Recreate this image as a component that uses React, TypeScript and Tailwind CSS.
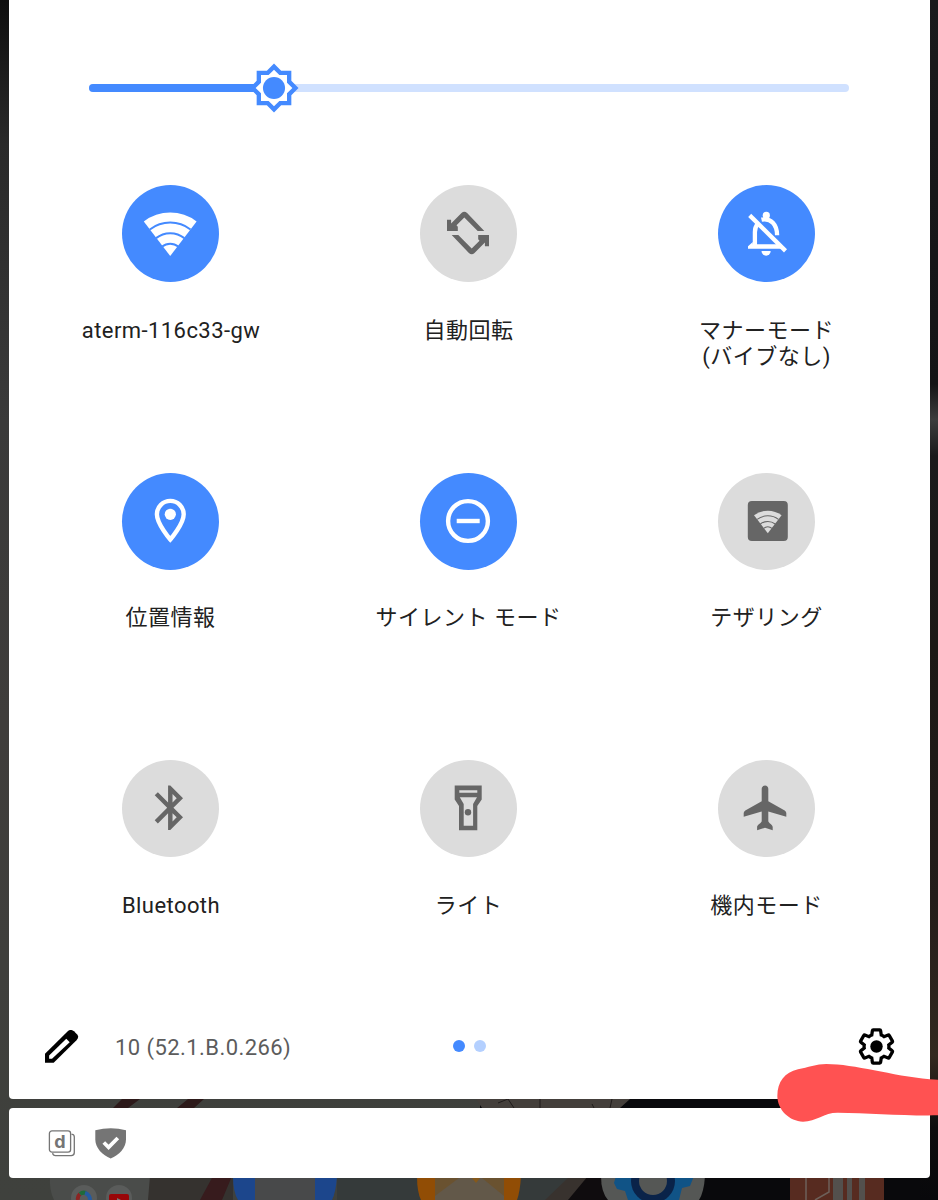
import React from "react";
import clsx from "clsx";

const BLUE = "#448aff";

function WifiFan({ gap }: { gap: string }) {
  return (
    <>
      <path d="M0 0L-26.4 -34.5A43.5 43.5 0 0 1 26.4 -34.5Z" fill="currentColor" />
      <g fill="none" stroke={gap} strokeWidth="2.1">
        <path d="M-21.3 -27.8A35 35 0 0 1 21.3 -27.8" transform="scale(.955)" />
        <path d="M-14.6 -18.4A23.5 23.5 0 0 1 14.6 -18.4" transform="scale(.97)" />
        <path d="M-8.3 -9.8A12.8 12.8 0 0 1 8.3 -9.8" transform="scale(.96)" />
      </g>
    </>
  );
}

function WifiIcon() {
  return (
    <g transform="translate(48.7 71)">
      <WifiFan gap={BLUE} />
    </g>
  );
}

function RotateIcon() {
  const arrow =
    "M64.8 46H58.2L44.8 32.4 37 40.2 38.3 41.7V46H27.5V34.7H31.6V38.6L42 28.1Q44.8 25.6 47.6 28.1Z";
  return (
    <g fill="currentColor">
      <path d={arrow} />
      <path d={arrow} transform="rotate(180 48.5 48)" />
    </g>
  );
}

function BellOffIcon() {
  return (
    <>
      <g fill="none" stroke="currentColor" strokeWidth="4.3">
        <path d="M32.2 30.4L68 65.9" />
        <path d="M44 34.7C53.5 32.5 59.6 40 59.6 50.3" />
        <path d="M40.5 38.5Q37.4 42 37.4 47V61.5" />
      </g>
      <path d="M30.5 63.7V61.2L35.3 57V59.3H64V63.7Z" fill="currentColor" />
      <circle cx="48.8" cy="30.4" r="3.6" fill="currentColor" />
      <path d="M44 66H53.2A4.6 4.7 0 0 1 44 66Z" fill="currentColor" />
    </>
  );
}

function PinIcon() {
  return (
    <>
      <path
        d="M48.8 66.5C48.8 66.5 35.4 51 35.4 41.3a13.4 13.4 0 0 1 26.8 0C62.2 51 48.8 66.5 48.8 66.5Z"
        fill="none"
        stroke="currentColor"
        strokeWidth="4.4"
      />
      <circle cx="48.8" cy="41.3" r="5.6" fill="currentColor" />
    </>
  );
}

function DndIcon() {
  return (
    <g fill="none" stroke="currentColor" strokeWidth="4.4">
      <circle cx="48.5" cy="48" r="19.9" />
      <path d="M37.2 48H60.2" />
    </g>
  );
}

function TetherIcon() {
  return (
    <>
      <rect x="30.3" y="28" width="40" height="40" rx="4" fill="currentColor" />
      <g transform="translate(50.3 60.3) scale(.522)" className="text-[#dcdcdc]">
        <WifiFan gap="#666666" />
      </g>
    </>
  );
}

function BluetoothIcon() {
  return (
    <path
      transform="translate(22.1 21.1) scale(2.225)"
      fill="currentColor"
      d="M17.71 7.71L12 2h-1v7.59L6.41 5 5 6.41 10.59 12 5 17.59 6.41 19 11 14.41V22h1l5.71-5.71-4.3-4.29 4.3-4.29zM13 5.83l1.88 1.88L13 9.59V5.83zm1.88 10.46L13 18.17v-3.76l1.88 1.88z"
    />
  );
}

function FlashlightIcon() {
  return (
    <>
      <path
        fill="currentColor"
        fillRule="evenodd"
        d="M35.2 25.5H62.2V39.5L57.8 46V70.3H39.5V46L35.2 39.5ZM39.8 30.2V32.8H57.8V30.2ZM40.3 37.2L44.2 44V65.8H53.6V44L57.5 37.2Z"
      />
      <circle cx="48.5" cy="52.2" r="3.2" fill="currentColor" />
    </>
  );
}

function AirplaneIcon() {
  return (
    <path
      fill="currentColor"
      d="M47.5 25.5C49.4 25.5 50.8 27 50.8 28.8V41.2L67.2 50.5Q68.8 51.5 68.8 53V56.8L50.8 51.5V61.2C51.5 63.5 55.2 64.5 55.2 67V70.2L47.5 67.8 39.6 70.2V67C39.6 64.5 43.5 63.5 44.2 61.2V51.5L26.2 56.8V53Q26.2 51.5 27.8 50.5L44.2 41.2V28.8C44.2 27 45.6 25.5 47.5 25.5Z"
    />
  );
}

const tiles = [
  { label: ["aterm-116c33-gw"], latin: true, on: true, icon: <WifiIcon /> },
  { label: ["自動回転"], on: false, icon: <RotateIcon /> },
  { label: ["マナーモード", "(バイブなし)"], on: true, icon: <BellOffIcon /> },
  { label: ["位置情報"], on: true, icon: <PinIcon /> },
  { label: ["サイレント モード"], on: true, icon: <DndIcon /> },
  { label: ["テザリング"], on: false, icon: <TetherIcon /> },
  { label: ["Bluetooth"], latin: true, on: false, icon: <BluetoothIcon /> },
  { label: ["ライト"], on: false, icon: <FlashlightIcon /> },
  { label: ["機内モード"], on: false, icon: <AirplaneIcon /> },
];

// Dimmed home screen behind the shade
function Wallpaper() {
  return (
    <svg className="absolute inset-0" width="938" height="1200" viewBox="0 0 938 1200">
      <defs>
        <linearGradient id="left" x1="0" y1="0" x2="0" y2="1">
          <stop offset="0" stopColor="#0e0e0e" />
          <stop offset=".12" stopColor="#2a2a2a" />
          <stop offset=".35" stopColor="#3a3a3a" />
          <stop offset=".6" stopColor="#3f3d3b" />
          <stop offset="1" stopColor="#3f413d" />
        </linearGradient>
        <linearGradient id="right" x1="0" y1="0" x2="0" y2="1">
          <stop offset="0" stopColor="#1a1a1c" />
          <stop offset=".32" stopColor="#141416" />
          <stop offset=".35" stopColor="#3c3d3d" />
          <stop offset=".38" stopColor="#1a1a1b" />
          <stop offset=".54" stopColor="#1c1815" />
          <stop offset=".75" stopColor="#231d1a" />
          <stop offset=".88" stopColor="#33291f" />
          <stop offset=".94" stopColor="#0e0c0d" />
          <stop offset="1" stopColor="#08080b" />
        </linearGradient>
      </defs>
      <rect width="938" height="1200" fill="#09090c" />
      <rect width="480" height="1200" fill="url(#left)" />
      <rect x="920" width="18" height="1200" fill="url(#right)" />
      <path d="M113 1108L122 1099H140L128 1108ZM177 1108L188 1099H204L194 1108Z" fill="#2d1a1a" />
      <path d="M476 1099H630L620 1108H482Z" fill="#443f3b" />
      <path d="M498 1103L508 1099 514 1108M540 1099V1108M592 1104L594 1108M612 1099L610 1108" stroke="#1f1b1a" fill="none" />
      <rect x="337" y="1176" width="250" height="24" fill="#353a3a" />
      <path d="M545 1200L570 1176H620V1200Z" fill="#38322e" />
      <path d="M568 1200L588 1176H620V1200Z" fill="#0f0c0e" />
      <path d="M50 1176H150Q152 1190 148 1200H54Q49 1190 50 1176Z" fill="#4a4c4a" />
      <path d="M150 1176H233V1200H148Z" fill="#35322f" />
      <path d="M213 1176H232L222 1200H200Z" fill="#371b1d" />
      <circle cx="84" cy="1198" r="13" fill="#5a5c5b" />
      <circle cx="119" cy="1198" r="13" fill="#5a5c5b" />
      <path d="M78 1200A6 6 0 0 1 80 1194" fill="none" stroke="#8c2422" strokeWidth="4" />
      <path d="M80 1194A6.5 6.5 0 0 1 86 1193" fill="none" stroke="#1f6b3a" strokeWidth="4" />
      <path d="M85 1193A7 7 0 0 1 90 1200" fill="none" stroke="#245aa0" strokeWidth="4" />
      <rect x="109" y="1194" width="20" height="8" rx="2" fill="#990508" />
      <path d="M117 1198L121 1200H117Z" fill="#777" />
      <path d="M233 1176H337Q336 1192 332 1200H238Q233 1192 233 1176Z" fill="#1c468c" />
      <rect x="255" y="1176" width="60" height="24" fill="#48494a" />
      <path d="M417 1176H521Q520 1192 517 1200H421Q417 1192 417 1176Z" fill="#914d05" />
      <rect x="435" y="1176" width="69" height="24" fill="#6a5230" />
      <path d="M435 1196L459 1178H482L504 1196V1200H435Z" fill="#625849" />
      <path d="M472 1178H480L476 1183Z" fill="#86591b" />
      <path d="M601 1176H705Q704 1192 699 1200H608Q601 1192 601 1176Z" fill="#555755" />
      <path d="M616 1176H694L690 1186 682 1188 679 1200H628L625 1191 617 1189 614 1183Z" fill="#105386" />
      <circle cx="653" cy="1181" r="22" fill="#0a2349" />
      <circle cx="653" cy="1181" r="14" fill="#555755" />
      <rect x="790" y="1176" width="94" height="24" fill="#572b20" />
      <path d="M806 1176V1200M829 1176V1192L815 1200" fill="none" stroke="#6d6059" strokeWidth="1.5" />
      <path d="M833 1176H843V1200H833ZM847 1176H852V1200H847ZM859 1176H865V1200H859Z" fill="#53504d" />
    </svg>
  );
}

function BrightnessSlider() {
  return (
    <div className="relative ml-[79.5px] mt-[84px] h-[7.5px] w-[760px] shrink-0 rounded-full bg-[#d0e1ff]">
      <div className="h-full w-[170px] rounded-l-full bg-[#448aff]" />
      <svg className="absolute left-[159.5px] top-[-22px]" width="52" height="52" viewBox="0 0 24 24">
        <path
          d="M20 8.69V4h-4.69L12 .69 8.69 4H4v4.69L.69 12 4 15.31V20h4.69L12 23.31 15.31 20H20v-4.69L23.31 12z"
          fill={BLUE}
        />
        <path
          d="M18 14.48V18h-3.52L12 20.48 9.52 18H6v-3.52L3.52 12 6 9.52V6h3.52L12 3.52 14.48 6H18v3.52L20.48 12z"
          fill="#fff"
        />
        <circle cx="12" cy="12" r="5.1" fill={BLUE} />
      </svg>
    </div>
  );
}

function Footer() {
  return (
    <div className="mt-auto flex h-[106px] shrink-0 items-center pl-9 pr-[35px]">
      <svg width="34" height="33" viewBox="0 0 34 33">
        <path d="M0 23.7V32.7H8.7L31.5 10.2Q34.5 7 32.2 4.4L29 1.2Q26 -1.2 23 1Z" />
        <path d="M4.1 25.6V28.8H7L24.7 12.2 21.3 8.8Z" fill="#fff" />
      </svg>
      <span className="ml-9 w-[300px] pt-[3px] text-[22px] leading-[26px] tracking-[0.43px] text-[#5c5c5c]">
        10 (52.1.B.0.266)
      </span>
      <div className="ml-[37.5px] flex gap-[9px]">
        <span className="size-3 rounded-full bg-[#448aff]" />
        <span className="size-3 rounded-full bg-[#b4d0ff]" />
      </div>
      <svg className="ml-auto" width="37" height="37" viewBox="1.25 1.25 21.5 21.5">
        <path
          d="M19.14 12.94c.04-.3.06-.61.06-.94 0-.32-.02-.64-.07-.94l2.03-1.58c.18-.14.23-.41.12-.61l-1.92-3.32c-.12-.22-.37-.29-.59-.22l-2.39.96c-.5-.38-1.03-.7-1.62-.94l-.36-2.54c-.04-.24-.24-.41-.48-.41h-3.84c-.24 0-.43.17-.47.41l-.36 2.54c-.59.24-1.13.57-1.62.94l-2.39-.96c-.22-.08-.47 0-.59.22L2.74 8.87c-.12.21-.08.47.12.61l2.03 1.58c-.05.3-.09.63-.09.94s.02.64.07.94l-2.03 1.58c-.18.14-.23.41-.12.61l1.92 3.32c.12.22.37.29.59.22l2.39-.96c.5.38 1.03.7 1.62.94l.36 2.54c.05.24.24.41.48.41h3.84c.24 0 .44-.17.47-.41l.36-2.54c.59-.24 1.13-.56 1.62-.94l2.39.96c.22.08.47 0 .59-.22l1.92-3.32c.12-.22.07-.47-.12-.61l-2.01-1.58z"
          fill="none"
          stroke="#000"
          strokeWidth="1.9"
        />
        <circle cx="12" cy="12" r="3.6" />
      </svg>
    </div>
  );
}

function NotificationBar() {
  return (
    <div className="flex h-[70px] items-center gap-[19px] rounded-[4px] bg-white pl-[39px]">
      <svg width="28" height="28" viewBox="0 0 28 28">
        <g fill="none" stroke="#757575" strokeWidth="1.3">
          <rect x="1.4" y="1.9" width="21.2" height="21.2" rx="2.6" />
          <path d="M23.5 5.3H24.2Q26.3 5.6 26.3 8V23.5Q26.3 26.6 23.2 26.6H7.5Q5 26.6 4.6 24.2" />
        </g>
        <text x="12" y="19.2" textAnchor="middle" fontFamily="Inter" fontWeight="700" fontSize="18" fill="#757575">
          d
        </text>
      </svg>
      <svg width="32" height="32" viewBox="0 0 32 32">
        <path d="M.3 3.2Q16-.8 31 3.2V12.5C31 21 24 28 15.7 31.5 7.4 28 .3 21 .3 12.5Z" fill="#757575" />
        <path d="M8.8 15.5L13.6 20.3L22.8 11" fill="none" stroke="#fff" strokeWidth="3.8" />
      </svg>
    </div>
  );
}

export default function App() {
  return (
    <div className="relative h-[1200px] w-[938px] overflow-hidden bg-black font-[Roboto,'Noto_Sans_CJK_JP',sans-serif]">
      <Wallpaper />
      <div className="relative ml-[9px] flex w-[920.5px] flex-col gap-[9px]">
        <div className="flex h-[1099px] flex-col rounded-b-[4px] bg-white">
          <BrightnessSlider />
          <div className="ml-3 mt-[93.5px] grid w-[894px] shrink-0 auto-rows-[185px] grid-cols-3 gap-y-[102.6px]">
            {tiles.map((tile) => (
              <div key={tile.label[0]} className="flex flex-col items-center">
                <div
                  className={clsx(
                    "size-[97px] shrink-0 rounded-full",
                    tile.on ? "bg-[#448aff] text-white" : "bg-[#dcdcdc] text-[#666666]"
                  )}
                >
                  <svg width="97" height="97" viewBox="0.5 0 97 97">
                    {tile.icon}
                  </svg>
                </div>
                <div
                  className={clsx(
                    "mt-[35.5px] text-center text-[22px] leading-[26px] text-[#212121]",
                    tile.latin ? "pl-[2px] tracking-[0.43px]" : "pl-[1px] tracking-[0.5px]"
                  )}
                >
                  {tile.label.map((line) => (
                    <p key={line} className="h-[26px] whitespace-nowrap">
                      {line}
                    </p>
                  ))}
                </div>
              </div>
            ))}
          </div>
          <Footer />
        </div>
        <NotificationBar />
      </div>
      {/* red marker stroke under the settings gear */}
      <svg className="absolute left-[776px] top-[1062px]" width="162" height="62" viewBox="414 156 486 186">
        <path
          d="M418 258C418 215 440 188 480 178C510 172 535 162 565 162C650 162 760 197 875 208L900 209V316C800 318 690 309 600 308C560 307 535 334 495 335C455 334 418 300 418 258Z"
          fill="#ff5252"
        />
      </svg>
    </div>
  );
}
